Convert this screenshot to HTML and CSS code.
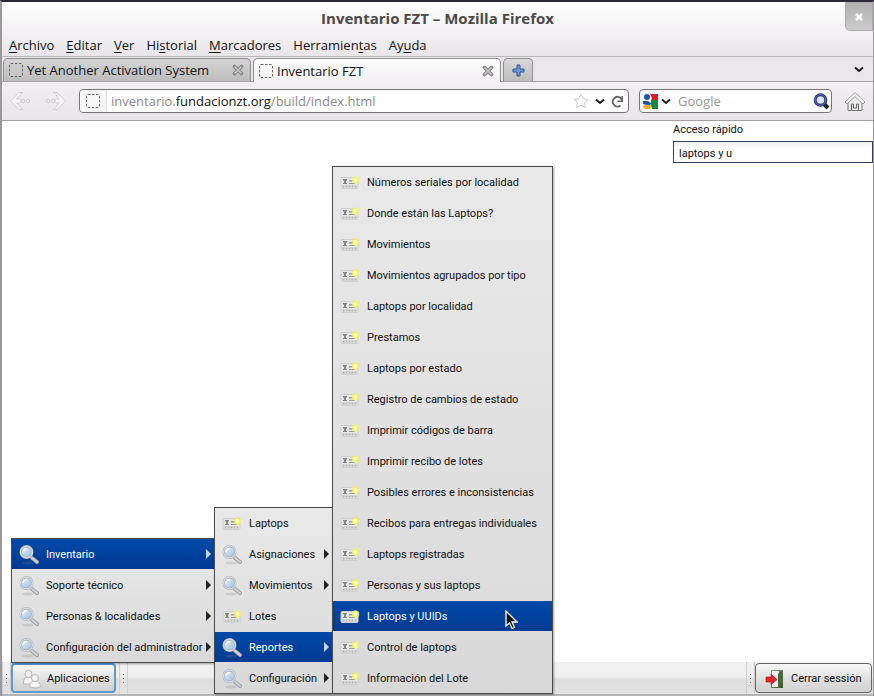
FILE: index.html
```
<!DOCTYPE html>
<html lang="es">
<head>
<meta charset="utf-8">
<title>Inventario FZT</title>
<link rel="stylesheet" href="styles.css">
</head>
<body>
<svg class="defs" aria-hidden="true">
  <defs>
    <linearGradient id="glass" x1="0" y1="0" x2="1" y2="1"><stop offset="0" stop-color="#e8f2fb"/><stop offset="1" stop-color="#9bbbe0"/></linearGradient>
    <linearGradient id="door" x1="0" y1="0" x2="1" y2="1"><stop offset="0" stop-color="#8aa07a"/><stop offset="1" stop-color="#2f5220"/></linearGradient>
    <symbol id="lens" viewBox="0 0 20 20">
      <ellipse cx="9" cy="18" rx="6" ry="1.500" fill="#888" opacity=".25"/>
      <path d="M13 13l5 4" stroke="#9b9ea1" stroke-width="4" stroke-linecap="round"/>
      <path d="M12 12l6 5" stroke="#d0d2d4" stroke-width="2.200" stroke-linecap="round"/>
      <circle cx="7.500" cy="7" r="5.800" fill="url(#glass)" stroke="#a9b1ba" stroke-width="2.400"/>
      <circle cx="7.500" cy="7" r="5.900" fill="none" stroke="#e6eaee" stroke-width="1"/>
      <path d="M4 7c0-2 2-4 4-3" stroke="#fff" stroke-width="1.500" fill="none"/>
    </symbol>
    <symbol id="card" viewBox="0 0 20 14">
      <rect x="1" y="1.500" width="17" height="11" rx="1" fill="#e6e6e6" stroke="#cfcfcf"/>
      <path d="M3 3h4v1.500H6V7h1v1H3V7h1V4.500H3z" fill="#858585"/>
      <path d="M9 4h4v1.500H9zM9 7h6v1H9z" fill="#9a9a9a"/>
      <path d="M2.500 10.500h14" stroke="#b4b4b4" stroke-width="1.800" stroke-dasharray="2 1"/>
      <circle cx="15.500" cy="4" r="3.800" fill="#f2f45a" opacity=".8"/>
      <circle cx="15.500" cy="4" r="2" fill="#ffffc4"/>
    </symbol>
    <symbol id="page" viewBox="0 0 14 14"><rect x=".5" y=".5" width="13" height="13" rx="1.500" fill="none" stroke="#666" stroke-dasharray="2.500 1.500"/></symbol>
    <symbol id="chev" viewBox="0 0 10 7"><path d="M1 1.500l4 3.500 4-3.500" fill="none" stroke="#1d1d1d" stroke-width="2"/></symbol>
    <symbol id="cross" viewBox="0 0 12 12"><path d="M2.500 2.500l7 7m0-7l-7 7" stroke="#868686" stroke-width="3.600" stroke-linecap="round"/><path d="M2.500 2.500l7 7m0-7l-7 7" stroke="#c4c4c4" stroke-width="1.600"/></symbol>
    <symbol id="arrow" viewBox="0 0 22 20"><path d="M10 1.500h3.500L7.500 8h1.500a2.200 2.200 0 1 1 0 4H7.500l6 6.500H10L1.500 10z" fill="#f6f6f6" stroke="#d0cfd0"/><circle cx="14" cy="10" r="1.800" fill="none" stroke="#d0cfd0"/><circle cx="19" cy="10" r="1.800" fill="none" stroke="#d0cfd0"/></symbol>
  </defs>
</svg>
<div class="window">
  <header class="titlebar">
    <h1>Inventario FZT – Mozilla Firefox</h1>
    <button class="close" aria-label="Cerrar ventana"><svg width="10" height="10" viewBox="0 0 10 10"><path d="M2 2l6 6m0-6L2 8" stroke="#fff" stroke-width="2.500"/></svg></button>
    <nav class="menubar">
      <button><u>A</u>rchivo</button><button><u>E</u>ditar</button><button><u>V</u>er</button><button>Hi<u>s</u>torial</button><button><u>M</u>arcadores</button><button>Herramien<u>t</u>as</button><button>Ay<u>u</u>da</button>
    </nav>
  </header>
  <div class="tabs">
    <div class="tab"><svg width="14" height="14"><use href="#page"/></svg><span>Yet Another Activation System</span><button aria-label="Cerrar pestaña"><svg width="12" height="12"><use href="#cross"/></svg></button></div>
    <div class="tab active"><svg width="14" height="14"><use href="#page"/></svg><span>Inventario FZT</span><button aria-label="Cerrar pestaña"><svg width="12" height="12"><use href="#cross"/></svg></button></div>
    <button class="newtab" aria-label="Nueva pestaña"><svg width="13" height="13" viewBox="0 0 13 13"><path d="M5 1h3v4h4v3H8v4H5V8H1V5h4z" fill="#6d9ad6" stroke="#2b589c"/></svg></button>
    <button class="alltabs" aria-label="Lista de pestañas"><svg width="10" height="7"><use href="#chev"/></svg></button>
  </div>
  <div class="toolbar">
    <button class="nav" aria-label="Atrás"><svg width="22" height="20"><use href="#arrow"/></svg></button>
    <button class="nav forward" aria-label="Adelante"><svg width="22" height="20"><use href="#arrow"/></svg></button>
    <div class="field url">
      <span class="identity"><svg width="14" height="14"><use href="#page"/></svg></span>
      <span class="address">inventario.<b>fundacionzt.org</b>/build/index.html</span>
      <button aria-label="Marcador"><svg width="16" height="16" viewBox="0 0 16 16"><path d="M8 1l2.100 4.700 5 .6-3.700 3.400 1 5L8 12.200l-4.400 2.500 1-5L.9 6.300l5-.6z" fill="#fff" stroke="#ccc"/></svg></button>
      <button aria-label="Historial"><svg width="10" height="7"><use href="#chev"/></svg></button>
      <button aria-label="Recargar"><svg width="13" height="13" viewBox="0 0 13 13"><path d="M9.500 10.500A4.800 4.800 0 1 1 9 2.500L10.500 4.500" fill="none" stroke="#666" stroke-width="1.800"/><path d="M12 1v6H6.500V5.500H10L10.500 1z" fill="#666"/></svg></button>
    </div>
    <div class="field search">
      <svg width="17" height="17" viewBox="0 0 17 17"><path d="M7 1h9v7H10z" fill="#e01b24"/><path d="M9 7h7v9H9z" fill="#148a3d"/><path d="M0 1h8l2 4-2 3 2 8H0z" fill="#f4f6fa"/><circle cx="5" cy="4" r="3" fill="#2455a8"/><path d="M1 8q4-1 8 2l-1 3-7-2z" fill="#2455a8"/><ellipse cx="5" cy="14" rx="3.800" ry="2.300" fill="#efaa20"/></svg>
      <svg width="10" height="7"><use href="#chev"/></svg>
      <input type="text" placeholder="Google" aria-label="Google">
      <button aria-label="Buscar"><svg width="17" height="17" viewBox="0 0 17 17"><path d="M11 11l4 4" stroke="#222" stroke-width="4"/><circle cx="7.500" cy="7" r="5.300" fill="#dce6f6" stroke="#26337a" stroke-width="3"/><circle cx="7.500" cy="7" r="5.300" fill="none" stroke="#6374b5" stroke-width="1"/></svg></button>
    </div>
    <button class="home" aria-label="Inicio"><svg width="22" height="21" viewBox="0 0 22 21"><path d="M4 11v8.500h14V11" fill="#eee" stroke="#777"/><path d="M1 11L11 1.500 21 11l-2 2-8-7.500L3 13z" fill="#fff" stroke="#999"/><path d="M7.500 19v-6h2v4h3v-4h2v6" fill="none" stroke="#666"/></svg></button>
  </div>
  <main class="page">
    <div class="quick"><label for="quick">Acceso rápido</label><input id="quick" type="text" value="laptops y u"></div>
  </main>
  <footer class="taskbar">
    <span class="grip"></span>
    <button class="apps"><svg width="20" height="20" viewBox="0 0 20 20"><g fill="#f5f5f5" stroke="#b8b8b8"><path d="M1.500 13q0-5 5-5t5 5v2h-10z"/><circle cx="6.500" cy="5" r="3.500"/><path d="M7.500 18q0-6 5.500-6t5.500 6q-5 2-11 0z"/><circle cx="13" cy="9" r="3.500"/></g></svg>Aplicaciones</button>
    <span class="grip after"></span>
    <span class="fill"></span>
    <span class="grip"></span>
    <button class="logout"><svg width="20" height="20" viewBox="0 0 20 20"><path d="M6 1h12v18H6z" fill="url(#door)"/><path d="M7 2h7v16H7z" fill="#eef0f0"/><path d="M13 5l4-3v16l-4 1z" fill="#476839"/><path d="M1 8h5V5l6 5.500L6 16v-3H1z" fill="#e3242b" stroke="#b51219" stroke-width=".6"/></svg>Cerrar sessión</button>
  </footer>
</div>
<div class="menus">
  <ul class="menu first">
    <li><button class="sel sub"><svg width="20" height="20"><use href="#lens"/></svg>Inventario</button></li>
    <li><button class="sub"><svg width="20" height="20"><use href="#lens"/></svg>Soporte técnico</button></li>
    <li><button class="sub"><svg width="20" height="20"><use href="#lens"/></svg>Personas &amp; localidades</button></li>
    <li><button class="sub"><svg width="20" height="20"><use href="#lens"/></svg>Configuración del administrador</button></li>
  </ul>
  <ul class="menu second">
    <li><button><svg width="20" height="14"><use href="#card"/></svg>Laptops</button></li>
    <li><button class="sub"><svg width="20" height="20"><use href="#lens"/></svg>Asignaciones</button></li>
    <li><button class="sub"><svg width="20" height="20"><use href="#lens"/></svg>Movimientos</button></li>
    <li><button><svg width="20" height="14"><use href="#card"/></svg>Lotes</button></li>
    <li><button class="sel sub"><svg width="20" height="20"><use href="#lens"/></svg>Reportes</button></li>
    <li><button class="sub"><svg width="20" height="20"><use href="#lens"/></svg>Configuración</button></li>
  </ul>
  <ul class="menu third">
    <li><button><svg width="20" height="14"><use href="#card"/></svg>Números seriales por localidad</button></li>
    <li><button><svg width="20" height="14"><use href="#card"/></svg>Donde están las Laptops?</button></li>
    <li><button><svg width="20" height="14"><use href="#card"/></svg>Movimientos</button></li>
    <li><button><svg width="20" height="14"><use href="#card"/></svg>Movimientos agrupados por tipo</button></li>
    <li><button><svg width="20" height="14"><use href="#card"/></svg>Laptops por localidad</button></li>
    <li><button><svg width="20" height="14"><use href="#card"/></svg>Prestamos</button></li>
    <li><button><svg width="20" height="14"><use href="#card"/></svg>Laptops por estado</button></li>
    <li><button><svg width="20" height="14"><use href="#card"/></svg>Registro de cambios de estado</button></li>
    <li><button><svg width="20" height="14"><use href="#card"/></svg>Imprimir códigos de barra</button></li>
    <li><button><svg width="20" height="14"><use href="#card"/></svg>Imprimir recibo de lotes</button></li>
    <li><button><svg width="20" height="14"><use href="#card"/></svg>Posibles errores e inconsistencias</button></li>
    <li><button><svg width="20" height="14"><use href="#card"/></svg>Recibos para entregas individuales</button></li>
    <li><button><svg width="20" height="14"><use href="#card"/></svg>Laptops registradas</button></li>
    <li><button><svg width="20" height="14"><use href="#card"/></svg>Personas y sus laptops</button></li>
    <li><button class="sel"><svg width="20" height="14"><use href="#card"/></svg>Laptops y UUIDs</button>
      <svg class="pointer" width="13" height="20" viewBox="0 0 13 20"><path d="M1 1v15l3.500-3.200L7 18.500l2.500-1L7 12h5z" fill="#111" stroke="#fff" stroke-width="1.300"/></svg></li>
    <li><button><svg width="20" height="14"><use href="#card"/></svg>Control de laptops</button></li>
    <li><button><svg width="20" height="14"><use href="#card"/></svg>Información del Lote</button></li>
  </ul>
</div>
</body>
</html>
```
FILE: styles.css
```
* { box-sizing: border-box; }
body { margin: 0; background: #2b2833; font: 13px/18px "Open Sans", "Noto Sans", sans-serif; color: #111; }
button, input { font: inherit; color: inherit; margin: 0; padding: 0; border: 0; background: none; outline: 0; }
svg { display: block; flex: none; }
.defs { position: absolute; width: 0; height: 0; }
.window { display: flex; flex-direction: column; height: 100vh; border: solid #9a989b; border-width: 0 1px 0 2px; border-top: 2px solid #2b2833; background: #fff; }

.titlebar { position: relative; height: 55px; background: linear-gradient(#fff, #e9e6e9); border-bottom: 1px solid #bbb8bb; border-radius: 4px 0 0 0; }
.titlebar h1 { margin: 0; padding-top: 6px; font-size: 15px; line-height: 20px; text-align: center; color: #4a4a4a; }
.close { position: absolute; top: 0; right: 0; width: 28px; height: 29px; display: grid; place-items: center; background: linear-gradient(#b0b0b0, #ccc); border: 1px solid #aaa; border-radius: 0 0 0 5px; }
.menubar { display: flex; gap: 12px; padding: 8px 7px 0; }
.menubar u { text-underline-offset: 2px; }

.tabs { display: flex; gap: 3px; height: 25px; padding: 1px 0 0 1px; background: #e9e6e9; border-bottom: 1px solid #a3a0a3; }
.tab { flex: 0 1 248px; height: 23px; display: flex; align-items: center; gap: 4px; padding: 0 6px 0 5px; border: 1px solid #8f8d8f; border-bottom: 0; border-radius: 5px 5px 0 0; background: linear-gradient(#d5d4d5, #bebdbe); }
.tab span { flex: 1; white-space: nowrap; }
.tab.active { height: 24px; margin-left: -1px; background: linear-gradient(#fff, #f1eff1); }
.newtab { width: 30px; height: 23px; margin-left: -1px; display: grid; place-items: center; border: 1px solid #8f8d8f; border-bottom: 0; border-radius: 5px 5px 0 0; background: linear-gradient(#d9d8d9, #bebdbe); }
.alltabs { margin-left: auto; padding: 0 9px; }

.toolbar { display: flex; align-items: center; height: 39px; padding: 0 7px 0 6px; background: linear-gradient(#f1eff1, #e9e6e9); border-bottom: 1px solid #a3a0a3; }
.nav { padding: 0 1px; margin-right: 12px; }
.forward { margin-right: 11px; transform: scaleX(-1); }
.field { display: flex; align-items: center; height: 24px; border: 1px solid #777577; border-radius: 4px; background: #fff; }
.url { flex: 1; margin-right: 10px; gap: 6px; padding-right: 4px; }
.identity { display: grid; place-items: center; width: 27px; height: 22px; border-right: 1px solid #ddd; background: #f8f7f8; border-radius: 4px 0 0 4px; margin-right: -2px; }
.address { flex: 1; color: #8c8c8c; white-space: nowrap; }
.address b { font-weight: 400; color: #111; }
.search { width: 193px; padding: 0 1px 0 2px; gap: 2px; margin-right: 12px; }
.search input { flex: 1; min-width: 0; padding-left: 5px; }
.search input::placeholder { color: #999; opacity: 1; }

.page, .taskbar, .menus { font-family: Roboto, "Open Sans", sans-serif; font-size: 11px; line-height: 16px; }
.page { flex: 1; min-height: 0; display: flex; justify-content: flex-end; }
.quick { width: 200px; padding-top: 1px; }
.quick label { display: block; }
.quick input { display: block; width: 100%; height: 22px; margin-top: 3px; padding: 2px 5px 0; border: 1px solid #33415c; background: linear-gradient(#efefef, #fff 6px); }

.taskbar { display: flex; height: 34px; padding: 0 1px 2px 0; border-bottom: 2px solid #b5b5b5; background: linear-gradient(#f0f0f0 45%, #dedede 55%, #e2e2e2); }
.taskbar button { display: flex; align-items: center; gap: 6px; height: 30px; margin-top: 1px; padding: 2px 9px 0; border: 1px solid #666; border-radius: 4px; background: linear-gradient(#f8f8f8, #ddd 60%, #d2d2d2); white-space: nowrap; }
.taskbar .apps { gap: 5px; width: 105px; border: 2px solid #5d9ad2; }
.taskbar .logout { width: 117px; }
.grip { display: flex; align-items: center; justify-content: center; width: 9px; height: 32px; border: solid #d0d0d0; border-width: 0 1px; }
.grip::before { content: ""; width: 1px; height: 9px; background: repeating-linear-gradient(#777 0 1px, transparent 1px 4px); }
.after { margin-left: 3px; }
.fill { flex: 1; }

.menus { position: absolute; left: 11px; bottom: 2px; display: flex; align-items: flex-end; }
.menu { list-style: none; margin: 0; padding: 0; display: grid; grid-template-columns: minmax(0, 1fr); gap: 1px; border: 1px solid #4b4b4b; background: linear-gradient(#e9e9ea, #d9d9da); box-shadow: 1px 1px 2px #0005; }
.menu li { position: relative; }
.menu button { position: relative; display: flex; align-items: center; gap: 7px; width: 100%; height: 30px; padding: 2px 7px 0; text-align: left; white-space: nowrap; }
.menu .sel { color: #fff; background: linear-gradient(#004aa8, #003a92); }
.menu .sub::after { content: ""; position: absolute; right: 3px; top: 10px; border: solid transparent; border-width: 5px 0 5px 5px; border-left-color: #222; }
.menu .sel::after { border-left-color: #c3d4ee; }
.first { width: 203px; margin-bottom: 31px; border-right: 0; }
.second { width: 118px; border-right: 0; }
.third { width: 221px; }
.pointer { position: absolute; right: 34px; top: 9px; }
```
